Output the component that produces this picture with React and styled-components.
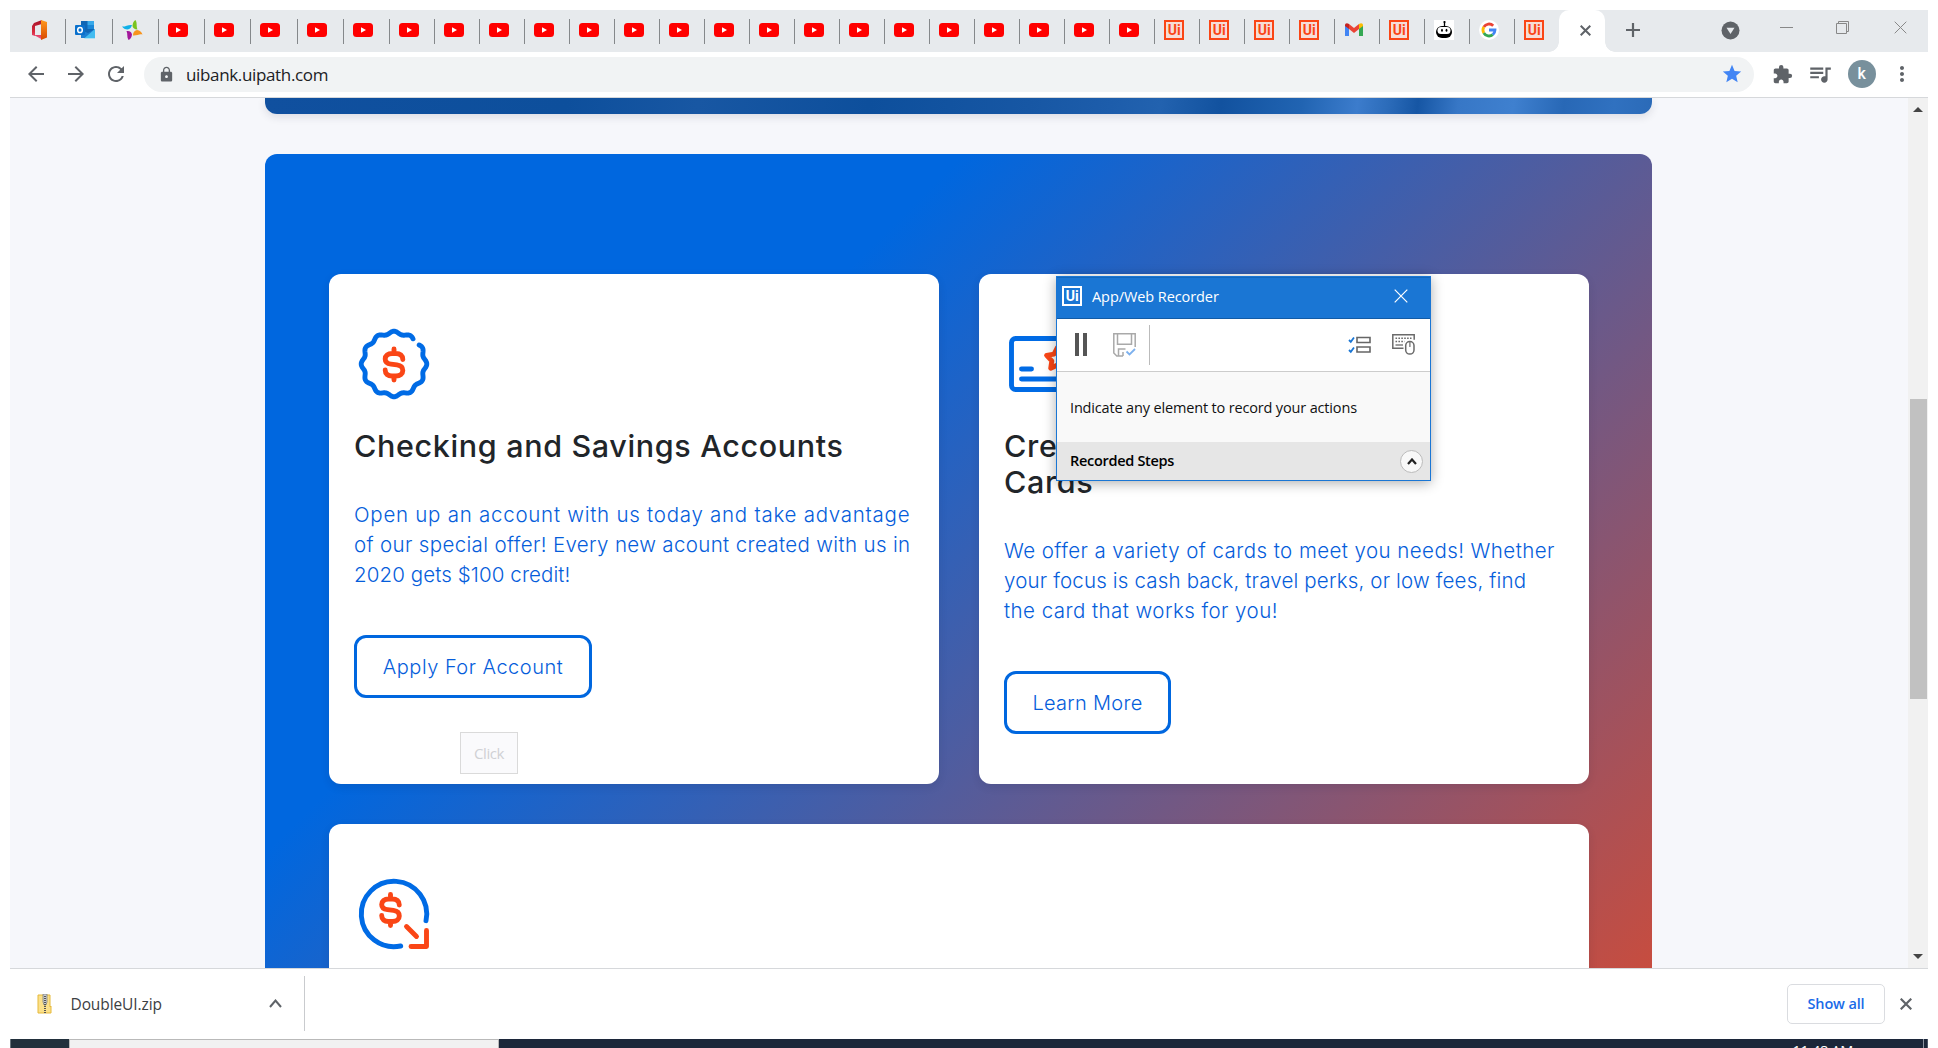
import React from "react";
import styled, { createGlobalStyle } from "styled-components";
import { MdExtension, MdLock, MdStar, MdArrowBack, MdArrowForward, MdRefresh, MdQueueMusic, MdMoreVert } from "react-icons/md";

const SEGOE = '"Open Sans", "Noto Sans", sans-serif';
const POPPINS = 'Inter, "Open Sans", sans-serif';

const GlobalStyle = createGlobalStyle`
  *, *::before, *::after { box-sizing: border-box; }
  body { margin: 0; background: #fff; overflow: hidden; }
  p, h2 { margin: 0; }
  svg { display: block; flex: none; }
  button { font: inherit; background: none; padding: 0; }
`;

const Screen = styled.div`
  width: 1938px;
  height: 1048px;
  padding: 10px 10px 0;
  display: flex;
  flex-direction: column;
  overflow: hidden;
  font-family: ${SEGOE};
`;

/* ---------- tab strip ---------- */
const TabStrip = styled.div`
  height: 42px;
  flex: none;
  display: flex;
  background: #e7eaed;
`;
const Tab = styled.div`
  width: ${(p) => p.$width}px;
  flex: none;
  display: flex;
  align-items: center;
  justify-content: space-between;
  padding-left: ${(p) => p.$lead || 9}px;
  svg { margin-bottom: 2px; }
`;
const TabDivider = styled.span`
  width: 1.4px;
  height: 25px;
  background: #85888b;
`;
const ActiveTab = styled.div`
  position: relative;
  width: 46px;
  border-radius: 10px 10px 0 0;
  background: #fff;
  display: flex;
  align-items: center;
  justify-content: center;
  padding: 0 0 2px 6px;
  &::before, &::after {
    content: "";
    position: absolute;
    bottom: 0;
    width: 10px;
    height: 10px;
  }
  &::before { left: -10px; background: radial-gradient(circle at 0 0, transparent 9.5px, #fff 10px); }
  &::after { right: -10px; background: radial-gradient(circle at 100% 0, transparent 9.5px, #fff 10px); }
`;
const NewTab = styled.div`
  padding: 12px 0 0 20px;
  flex: 1;
`;
const WindowButtons = styled.div`
  display: flex;
  padding-right: 21px;
`;
const WindowIcon = styled.div`
  padding-top: ${(p) => p.$top || 10}px;
  margin-left: ${(p) => p.$gap}px;
`;

/* ---------- address toolbar ---------- */
const Toolbar = styled.div`
  height: 46px;
  flex: none;
  display: flex;
  align-items: center;
  padding: 0 14px 1px 14px;
  border-bottom: 1px solid #d6d8db;
  color: #5f6368;
`;
const NavButtons = styled.div`
  display: flex;
  gap: 16px;
  margin-right: 16px;
`;
const Omnibox = styled.div`
  height: 35px;
  width: 1610px;
  border-radius: 18px;
  background: #f1f3f4;
  display: flex;
  align-items: center;
  padding: 0 11px 0 14px;
`;
const Url = styled.span`
  flex: 1;
  margin-left: 11px;
  font-size: 17px;
  letter-spacing: -0.35px;
  color: #202124;
`;
const ToolIcons = styled.div`
  flex: 1;
  display: flex;
  align-items: center;
  justify-content: space-between;
  padding-left: 18px;
`;
const Avatar = styled.span`
  width: 28px;
  height: 28px;
  border-radius: 50%;
  background: #78909c;
  color: #fff;
  font: 500 16px/27px Roboto, sans-serif;
  text-align: center;
`;

/* ---------- page ---------- */
const Viewport = styled.div`
  height: 870px;
  flex: none;
  display: flex;
  overflow: hidden;
  background: #f6f7fb;
`;
const Page = styled.main`
  width: 1898px;
  padding-left: 255px;
`;
const Banner = styled.div`
  width: 1387px;
  height: 16px;
  border-radius: 0 0 12px 12px;
  box-shadow: 0 3px 8px rgba(30, 30, 60, 0.12);
  background: linear-gradient(97deg, #10509f 0, #0d4f9c 300px, #1857a3 430px, #0d4f9c 600px, #1757a4 760px, #1d5dab 840px, #2262af 890px, #12529f 950px, #2164b2 1030px, #3c7ccc 1085px, #2c6cba 1115px, #1656a4 1145px, #3777c6 1185px, #3f80cf 1240px, #2868b6 1290px, #3071c0 1340px, #2a69b6 1387px);
`;
const OfferPanel = styled.section`
  width: 1387px;
  height: 1200px;
  margin-top: 40px;
  padding: 120px 63px 0 64px;
  border-radius: 12px;
  background: linear-gradient(135deg, #0067df 27%, #fa4616 100%);
  display: grid;
  grid-template-columns: 610px 610px;
  grid-template-rows: 510px 510px;
  gap: 40px;
`;
const Card = styled.article`
  grid-column: ${(p) => (p.$wide ? "span 2" : "auto")};
  padding: 50px 25px 0;
  border-radius: 12px;
  background: #fff;
  box-shadow: 0 3px 8px rgba(30, 30, 60, 0.12);
  font-family: ${POPPINS};
`;
const CardTitle = styled.h2`
  margin-top: 24px;
  font-size: 30.5px;
  font-weight: 500;
  line-height: 36px;
  color: #212529;
  span { display: block; white-space: nowrap; letter-spacing: ${(p) => p.$track}px; }
`;
const CardText = styled.p`
  margin-top: 36px;
  font-size: 20.5px;
  font-weight: 300;
  line-height: 30px;
  color: #055ddb;
`;
const Line = styled.span`
  display: block;
  white-space: nowrap;
  letter-spacing: ${(p) => p.$track}px;
`;
const OutlineButton = styled.button`
  display: block;
  width: ${(p) => p.$width}px;
  height: 63px;
  margin-top: 45px;
  border: 3px solid #0067df;
  border-radius: 12px;
  font-size: 20px;
  font-weight: 300;
  letter-spacing: ${(p) => p.$track}px;
  color: #055ddb;
  white-space: nowrap;
`;

const Scrollbar = styled.div`
  width: 20px;
  background: #f1f1f1;
  display: flex;
  flex-direction: column;
  align-items: center;
  justify-content: space-between;
  padding: 9px 0 9px;
`;
const Thumb = styled.div`
  width: 17px;
  height: 300px;
  margin-bottom: -31px;
  background: #c1c1c1;
`;

/* ---------- recorder window ---------- */
const Recorder = styled.aside`
  position: absolute;
  left: 1056px;
  top: 276px;
  width: 375px;
  height: 205px;
  border: 1px solid #1a76d4;
  box-shadow: 0 2px 12px rgba(0, 0, 0, 0.32);
  background: #f9f9f9;
  display: flex;
  flex-direction: column;
  font-size: 14.5px;
  color: #111;
`;
const RecorderTitle = styled.div`
  height: 42px;
  display: flex;
  align-items: center;
  padding: 0 22px 4px 5px;
  border-top: 1px solid #1368bd;
  border-bottom: 1px solid #125ba6;
  background: #1a76d4;
  color: #fff;
  span { flex: 1; margin-left: 10px; letter-spacing: ${(p) => p.$track}px; }
`;
const RecorderTools = styled.div`
  height: 53px;
  display: flex;
  align-items: center;
  padding: 0 15px 1px 18px;
  border-bottom: 1px solid #ccc;
  background: #fff;
`;
const RecordActions = styled.div`
  flex: 1;
  display: flex;
  align-items: center;
  gap: 26px;
`;
const RecordOptions = styled.div`
  display: flex;
  align-items: center;
  gap: 21px;
`;
const ToolDivider = styled.i`
  width: 1px;
  height: 40px;
  margin-left: -13px;
  background: #bbb;
`;
const RecorderMessage = styled.p`
  height: 70px;
  padding-left: 13px;
  line-height: 72px;
  letter-spacing: ${(p) => p.$track}px;
`;
const RecorderFooter = styled.div`
  flex: 1;
  display: flex;
  align-items: center;
  justify-content: space-between;
  padding: 0 7px 0 13px;
  background: #e6e6e6;
  font-weight: 600;
  letter-spacing: -0.3px;
  color: #000;
`;
const FooterLabel = styled.span`
  padding-bottom: 2px;
`;
const CollapseButton = styled.span`
  width: 23px;
  height: 23px;
  border: 1px solid #bbb;
  border-radius: 50%;
  background: #f8f8f8;
  display: grid;
  place-items: center;
`;
const ClickHint = styled.div`
  position: absolute;
  left: 460px;
  top: 732px;
  width: 58px;
  height: 42px;
  border: 1px solid #dadada;
  background: #fafafc;
  font-size: 15px;
  line-height: 40px;
  letter-spacing: -0.4px;
  text-align: center;
  color: #d0d1d4;
`;

/* ---------- download shelf and taskbar ---------- */
const Shelf = styled.div`
  height: 71px;
  flex: none;
  display: flex;
  align-items: center;
  border-top: 1px solid #d6d8db;
  padding: 0 16px 1px 0;
`;
const Download = styled.div`
  width: 295px;
  height: 55px;
  display: flex;
  align-items: center;
  padding: 0 22px 0 27px;
  border-right: 1px solid #c9cbce;
  font-size: 15.5px;
  color: #3c4043;
  span { flex: 1; margin-left: 17.5px; letter-spacing: -0.1px; }
`;
const ShowAll = styled.button`
  width: 98px;
  height: 40px;
  margin: 0 15px 0 auto;
  border: 1px solid #dadce0;
  border-radius: 5px;
  font-size: 14.5px;
  font-weight: 600;
  letter-spacing: -0.15px;
  color: #1a6be8;
`;
const Taskbar = styled.div`
  height: 9px;
  flex: none;
  display: flex;
  overflow: hidden;
  background: #1c273a;
  border-left: 1px solid #66727a;
`;
const StartArea = styled.div`
  width: 58px;
  background: #22303c;
`;
const SearchBox = styled.div`
  width: 430px;
  border: 1px solid #b9b9b9;
  border-bottom: 0;
  background: #f1f1f1;
`;
const Clock = styled.span`
  margin: 3px 70px 0 auto;
  font-size: 14.5px;
  line-height: 18px;
  letter-spacing: -0.3px;
  color: #fff;
`;
const DesktopEdge = styled.div`
  width: 5px;
  border-left: 1px solid #8b93a0;
  border-right: 1px solid #4b5566;
`;

/* ---------- icons ---------- */
const OfficeIcon = () => (
  <svg width="20" height="20" viewBox="0 0 20 20">
    <defs>
      <linearGradient id="officeLeft" x1="0" y1="0" x2="0" y2="1">
        <stop offset="0" stopColor="#a5122b" /><stop offset=".6" stopColor="#d92b3c" /><stop offset="1" stopColor="#f05a92" />
      </linearGradient>
      <linearGradient id="officeRight" x1="0" y1="0" x2="0" y2="1">
        <stop offset="0" stopColor="#ff9a1f" /><stop offset="1" stopColor="#d84800" />
      </linearGradient>
    </defs>
    <path d="M12 0 4 3 2 6v9l3 1V6l7-2zM4 15l8 4.5V15z" fill="url(#officeLeft)" />
    <path d="M11 0l6 2v15.500l-6 2.500z" fill="url(#officeRight)" />
  </svg>
);
const OutlookIcon = () => (
  <svg width="20" height="20" viewBox="0 0 20 20">
    <path d="M6 1h13v12H6z" fill="#1066b5" />
    <path d="M12.500 1H19v4h-6.500z" fill="#38a9ea" /><path d="M12.500 5H19v4h-6.500z" fill="#1c88d8" />
    <path d="M6 18h14V9l-7 4-7-3z" fill="#1c7fd2" /><path d="M20 9v9.500H9z" fill="#50d0fa" opacity=".75" />
    <rect y="5" width="10" height="10" rx="1" fill="#0a70cc" />
    <ellipse cx="5" cy="10" rx="2.300" ry="2.600" fill="none" stroke="#fff" strokeWidth="1.500" />
  </svg>
);
const PinwheelIcon = () => (
  <svg width="21" height="20" viewBox="0 0 21 20">
    <path d="M0 6.500C3 7 6 4.500 10 5 9 8 8 9 5.500 9.500 3 9.500 1.500 8.500 0 6.500z" fill="#0fb0e8" />
    <path d="M13.500 0c2 3 .5 6 2 9.500-3 0-4.500-1.500-5-3.500C10.500 3.500 11.500 1 13.500 0z" fill="#7ac41f" />
    <path d="M20.500 14.500c-3-1-6 1.500-9.500 1 0-3 1-4.500 4-5.500 3 .5 4.500 2 5.500 4.500z" fill="#f8941d" />
    <path d="M6.500 20c-2-3-.5-6-2-9 3.500-.5 5 1 5.500 3.500-.3 3-1.500 4.500-3.500 5.500z" fill="#a3189b" />
  </svg>
);
const YouTubeIcon = () => (
  <svg width="20" height="20" viewBox="0 0 20 20">
    <rect y="3" width="20" height="14" rx="3.500" fill="#f00" />
    <path d="M8 7.200v5.600l5-2.800z" fill="#fff" />
  </svg>
);
const UiIcon = ({ color = "#fa4616", back = "#f6ded8" }) => (
  <svg width="20" height="20" viewBox="0 0 20 20">
    <rect x="1" y="1" width="18" height="18" fill={back} stroke={color} strokeWidth="2" />
    <text x="10.200" y="15" textAnchor="middle" fontFamily="Roboto, sans-serif" fontWeight="700" fontSize="14" textLength="13" fill={color}>Ui</text>
  </svg>
);
const GmailIcon = () => (
  <svg width="20" height="20" viewBox="0 0 20 20">
    <path d="M1 5v11h4V8z" fill="#4285f4" /><path d="M15 8v8h4V5z" fill="#34a853" />
    <path d="M1 5.500C1 3 3 2.500 5 4v5L1 6z" fill="#c5221f" /><path d="M5 4l5 4 5-4v5l-5 4-5-4z" fill="#ea4335" />
    <path d="M15 4c2-1.500 4-1 4 1.500V6l-4 3z" fill="#fbbc04" />
  </svg>
);
const RobotIcon = () => (
  <svg width="20" height="20" viewBox="0 0 20 20">
    <rect width="20" height="20" fill="#fff" />
    <path d="M10.500 1.500V6" stroke="#000" strokeWidth="1.300" /><circle cx="10.500" cy="2" r="1.100" />
    <rect x="2" y="6" width="16" height="12" rx="6" />
    <rect x="3.500" y="7" width="13" height="7" rx="3.500" fill="#fff" />
    <ellipse cx="8" cy="10.300" rx=".9" ry="1.500" /><ellipse cx="12.500" cy="10.300" rx=".9" ry="1.500" />
  </svg>
);
const GoogleIcon = () => (
  <svg width="20" height="20" viewBox="0 0 20 20">
    <circle cx="10" cy="10" r="10" fill="#fff" />
    <g fill="none" strokeWidth="2.800">
      <path d="M14.200 5.700A6 6 0 0 0 4.800 7" stroke="#ea4335" />
      <path d="M4.800 7a6 6 0 0 0 0 6" stroke="#fbbc05" />
      <path d="M4.800 13a6 6 0 0 0 9 1.600" stroke="#34a853" />
      <path d="M13.800 14.600A6 6 0 0 0 16 10h-6" stroke="#4285f4" />
    </g>
  </svg>
);
const Cross = ({ size, width = 1, color }) => (
  <svg width={size} height={size} viewBox={`0 0 ${size} ${size}`}>
    <path d={`M.7.7 ${size - 0.7} ${size - 0.7}M${size - 0.7} .7.7 ${size - 0.7}`} stroke={color} strokeWidth={width} />
  </svg>
);

const DOLLAR = "M8.800-5C8.800-9 6-11 2-11H-2C-6-11-8.800-8.800-8.800-5.600-8.800-2.500-7-1-3-.4L3 .4C7 1 8.800 3 8.800 6 8.800 9.500 6 11.500 2 11.500H-2C-6 11.500-8.800 9.500-8.800 5.500M0-11V-15.600M0 11.500V15.600";

const scallop = Array.from({ length: 173 }, (_, i) => {
  const deg = -37 + i * 2;
  const a = (deg * Math.PI) / 180;
  const r = 31.4 + 1.4 * Math.cos(12 * a);
  return `${(40 + r * Math.cos(a)).toFixed(2)} ${(40 + r * Math.sin(a)).toFixed(2)}`;
});
const starPoints = Array.from({ length: 10 }, (_, i) => {
  const a = ((i * 36 - 90) * Math.PI) / 180;
  const r = i % 2 ? 6 : 11.5;
  return `${(53.5 + r * Math.cos(a)).toFixed(1)},${(35 + r * Math.sin(a)).toFixed(1)}`;
}).join(" ");

const CardIconSvg = styled.svg`
  width: 80px;
  height: 80px;
  overflow: visible;
  fill: none;
  stroke: #006be5;
  stroke-width: 4.9;
  stroke-linecap: round;
  stroke-linejoin: round;
  .accent { stroke: #fa4616; }
`;
const BadgeIcon = () => (
  <CardIconSvg viewBox="0 0 80 80">
    <path d={`M${scallop.join("L")}`} />
    <path className="accent" d={DOLLAR} transform="translate(40 40.500)" />
  </CardIconSvg>
);
const CreditCardIcon = () => (
  <CardIconSvg viewBox="0 0 80 80">
    <rect x="7.500" y="14.500" width="65" height="51" rx="4" />
    <path d="M17.500 45h10M17.500 55h44" />
    <polygon className="accent" points={starPoints} />
  </CardIconSvg>
);
const LoanIcon = () => (
  <CardIconSvg viewBox="0 0 80 80">
    <path d="M72 46.700A32.700 32.700 0 1 0 46.700 72" />
    <path className="accent" d={DOLLAR} transform="translate(36.500 36)" />
    <path className="accent" d="M52.500 52.500 62.500 62.500M72.500 56.500V72.500H57" />
  </CardIconSvg>
);

const PauseIcon = () => (
  <svg width="12" height="23" viewBox="0 0 12 23"><path d="M0 0h4v23H0zM8 0h4v23H8z" fill="#555" /></svg>
);
const SaveIcon = () => (
  <svg width="23" height="24" viewBox="0 0 23 24" fill="none" stroke="#a9a9a9" strokeWidth="1.500">
    <path d="M22.200 14V.8H.8V20l3 3h1.700V16h7M10 23v-4M5.500 23H10M4.500.8v10.500h14V.8" />
    <path d="m13.500 18.500 3 3L22 16" stroke="#7db1ee" strokeWidth="1.800" />
  </svg>
);
const ChecklistIcon = () => (
  <svg width="23" height="18" viewBox="0 0 23 18" fill="none">
    <path d="m1 4 1.800 1.800L6 1.500M1 14l1.800 1.800L6 11.500" stroke="#1a76d4" strokeWidth="1.800" />
    <path d="M9 1.500h13v5H9zM9 11h13v5H9z" stroke="#666" strokeWidth="1.600" />
  </svg>
);
const KeyboardMouseIcon = () => (
  <svg width="23" height="21" viewBox="0 0 23 21" fill="none" stroke="#6a6a6a" strokeWidth="1.500">
    <path d="M11.500 14.300H.8V.8h21.400v5" />
    <path d="M3.500 4.300h16M3.500 7.500h9" strokeDasharray="1.600 1.300" /><path d="M3.500 11h7.500" strokeWidth="1.300" />
    <rect x="13.700" y="7.500" width="8.300" height="12.600" rx="4.100" fill="#fff" /><path d="M17.900 7.500v5.500" strokeWidth="1.200" />
  </svg>
);
const ZipIcon = () => (
  <svg width="16" height="20" viewBox="0 0 16 20">
    <path d="M1 1h12v12l1-1v7H1z" fill="#fbe08a" stroke="#e6b93a" />
    <path d="M6 0h4v8l-1 3H7L6 8z" fill="#c8cbd0" stroke="#777" strokeWidth=".7" />
    <path d="M8 2v17" stroke="#555" strokeWidth="2" strokeDasharray="1 1" />
  </svg>
);
const Caret = ({ width, height, color, stroke }) => (
  <svg width={width} height={height} viewBox={`0 0 ${width} ${height}`} fill="none">
    <path d={`M1 ${height - 1}L${width / 2} 1.500 ${width - 1} ${height - 1}`} stroke={color} strokeWidth={stroke} />
  </svg>
);
const ScrollArrow = ({ down }) => (
  <svg width="10" height="5" viewBox="0 0 10 5"><path d={down ? "M0 0h10L5 5z" : "M0 5h10L5 0z"} fill="#444" /></svg>
);

const tabs = [
  { Icon: OfficeIcon, width: 56, lead: 20 },
  { Icon: OutlookIcon, width: 47 },
  { Icon: PinwheelIcon, width: 46 },
  ...Array.from({ length: 22 }, (_, i) => ({ Icon: YouTubeIcon, width: i === 2 ? 47 : i < 5 ? 46 : 45 })),
  ...Array.from({ length: 4 }, () => ({ Icon: UiIcon, width: 45 })),
  { Icon: GmailIcon, width: 45 },
  { Icon: UiIcon, width: 45 },
  { Icon: RobotIcon, width: 45 },
  { Icon: GoogleIcon, width: 45 },
  { Icon: UiIcon, width: 44, last: true },
];

export default function App() {
  return (
    <Screen>
      <GlobalStyle />
      <TabStrip>
        {tabs.map(({ Icon, width, lead, last }, i) => (
          <Tab key={i} $width={width} $lead={lead}>
            <Icon />
            {!last && <TabDivider />}
          </Tab>
        ))}
        <ActiveTab><Cross size={11} width={2} color="#5f6368" /></ActiveTab>
        <NewTab>
          <svg width="16" height="16" viewBox="0 0 16 16"><path d="M8 1v14M1 8h14" stroke="#5f6368" strokeWidth="2.200" /></svg>
        </NewTab>
        <WindowButtons>
          <WindowIcon $top={11}>
            <svg width="19" height="19" viewBox="0 0 19 19"><circle cx="9.500" cy="9.500" r="9" fill="#5f6368" /><path d="M5.500 6.800h8l-4 6.200z" fill="#e7eaed" /></svg>
          </WindowIcon>
          <WindowIcon $gap={40} $top={17}>
            <svg width="13" height="1" viewBox="0 0 13 1"><path d="M0 0h13v1H0z" fill="#888" /></svg>
          </WindowIcon>
          <WindowIcon $gap={43} $top={11}>
            <svg width="13" height="13" viewBox="0 0 13 13" fill="none" stroke="#888"><path d="M.5 2.500h10v10H.5zM2.500 2.500v-2h10v10h-2" /></svg>
          </WindowIcon>
          <WindowIcon $gap={45} $top={11}><Cross size={13} color="#888" /></WindowIcon>
        </WindowButtons>
      </TabStrip>

      <Toolbar>
        <NavButtons>
          <MdArrowBack size={24} />
          <MdArrowForward size={24} />
          <MdRefresh size={24} />
        </NavButtons>
        <Omnibox>
          <MdLock size={17} />
          <Url>uibank.uipath.com</Url>
          <MdStar size={22} color="#4285f4" />
        </Omnibox>
        <ToolIcons>
          <MdExtension size={21} />
          <MdQueueMusic size={26} />
          <Avatar>k</Avatar>
          <MdMoreVert size={24} />
        </ToolIcons>
      </Toolbar>

      <Viewport>
        <Page>
          <Banner />
          <OfferPanel>
            <Card>
              <BadgeIcon />
              <CardTitle $track={0.65}><span>Checking and Savings Accounts</span></CardTitle>
              <CardText>
                <Line $track={0.74}>Open up an account with us today and take advantage</Line>
                <Line $track={0.35}>of our special offer! Every new acount created with us in</Line>
                <Line $track={0.1}>2020 gets $100 credit!</Line>
              </CardText>
              <OutlineButton $width={238} $track={0.5}>Apply For Account</OutlineButton>
            </Card>
            <Card>
              <CreditCardIcon />
              <CardTitle $track={0.65}><span>Credit</span><span>Cards</span></CardTitle>
              <CardText>
                <Line $track={0.43}>We offer a variety of cards to meet you needs! Whether</Line>
                <Line $track={0.17}>your focus is cash back, travel perks, or low fees, find</Line>
                <Line $track={0.45}>the card that works for you!</Line>
              </CardText>
              <OutlineButton $width={167} $track={0.3}>Learn More</OutlineButton>
            </Card>
            <Card $wide>
              <LoanIcon />
            </Card>
          </OfferPanel>
        </Page>
        <Scrollbar>
          <ScrollArrow />
          <Thumb />
          <ScrollArrow down />
        </Scrollbar>
      </Viewport>

      <Shelf>
        <Download>
          <ZipIcon />
          <span>DoubleUI.zip</span>
          <Caret width={13} height={9} color="#5f6368" stroke={2} />
        </Download>
        <ShowAll>Show all</ShowAll>
        <Cross size={12} width={2.2} color="#5f6368" />
      </Shelf>
      <Taskbar>
        <StartArea />
        <SearchBox />
        <Clock>11:48 AM</Clock>
        <DesktopEdge />
      </Taskbar>

      <ClickHint>Click</ClickHint>
      <Recorder>
        <RecorderTitle $track={-0.08}>
          <UiIcon color="#fff" back="#1a76d4" />
          <span>App/Web Recorder</span>
          <Cross size={14} width={1.2} color="#fff" />
        </RecorderTitle>
        <RecorderTools>
          <RecordActions>
            <PauseIcon />
            <SaveIcon />
            <ToolDivider />
          </RecordActions>
          <RecordOptions>
            <ChecklistIcon />
            <KeyboardMouseIcon />
          </RecordOptions>
        </RecorderTools>
        <RecorderMessage $track={-0.16}>Indicate any element to record your actions</RecorderMessage>
        <RecorderFooter>
          <FooterLabel>Recorded Steps</FooterLabel>
          <CollapseButton><Caret width={10} height={7} color="#222" stroke={2.2} /></CollapseButton>
        </RecorderFooter>
      </Recorder>
    </Screen>
  );
}
